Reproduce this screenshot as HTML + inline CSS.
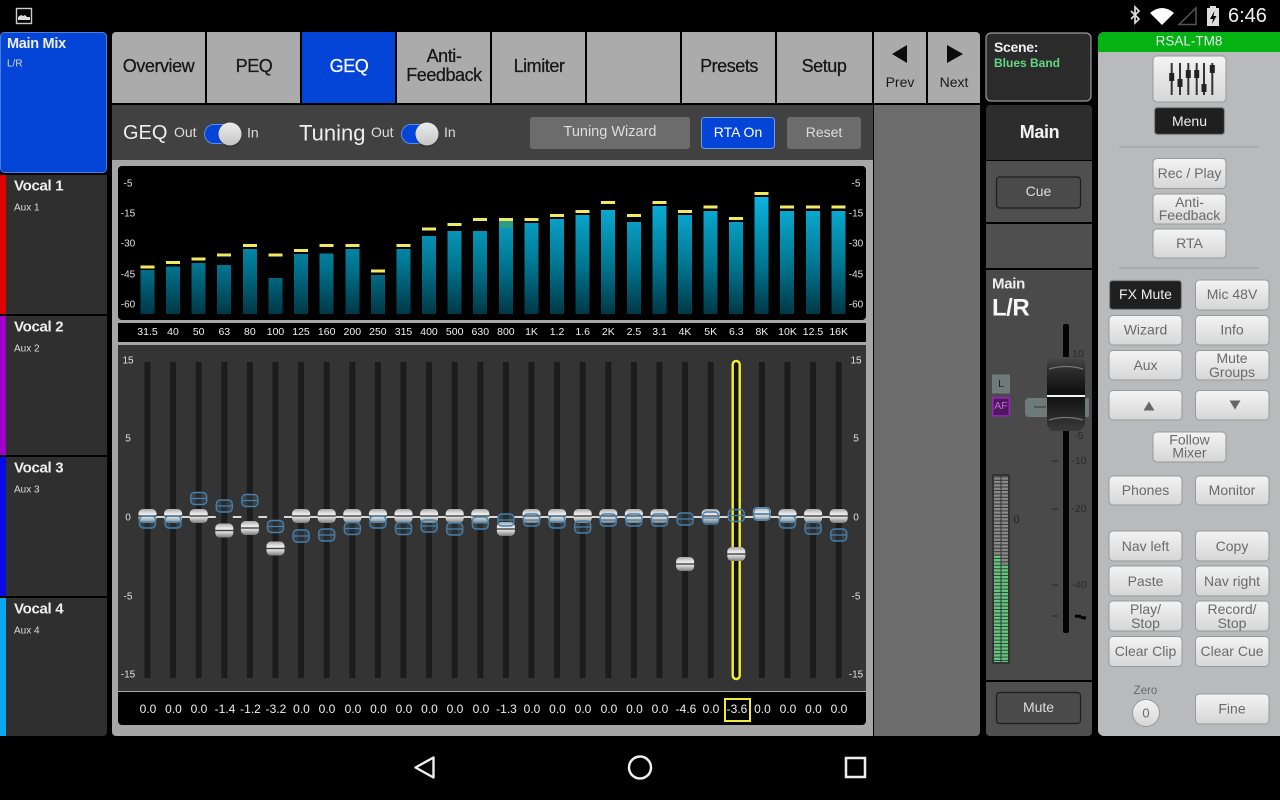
<!DOCTYPE html>
<html><head><meta charset="utf-8"><title>GEQ</title>
<style>
html,body{margin:0;padding:0;background:#000;width:1280px;height:800px;overflow:hidden}
svg{display:block}
text{font-family:"Liberation Sans",sans-serif;dominant-baseline:central}
.m{text-anchor:middle}
.t{font-size:18px;fill:#161616;stroke:#161616;stroke-width:.25px;text-anchor:middle;letter-spacing:-.45px}
.b{font-size:14px;fill:#6a6a6a;text-anchor:middle}
.s{font-size:10px;fill:#e0e0e0;text-anchor:middle}
.f{font-size:10.5px;fill:#eee;text-anchor:middle}
.v{font-size:12px;fill:#eee;text-anchor:middle}
.n{font-size:15px;font-weight:bold;fill:#eee;letter-spacing:-.3px}
.a{font-size:10px;fill:#ddd}
.k{font-size:10.5px;fill:#2a2a2a;text-anchor:middle}
</style></head><body>
<svg width="1280" height="800" viewBox="0 0 1280 800" xmlns="http://www.w3.org/2000/svg">
<defs>
<linearGradient id="bar" gradientUnits="userSpaceOnUse" x1="0" y1="197" x2="0" y2="314"><stop offset="0" stop-color="#0cb4de"/><stop offset=".6" stop-color="#00748e"/><stop offset="1" stop-color="#003848"/></linearGradient>
<linearGradient id="cap" x1="0" y1="0" x2="0" y2="1"><stop offset="0" stop-color="#a8a8a8"/><stop offset=".35" stop-color="#ececec"/><stop offset=".6" stop-color="#dedede"/><stop offset="1" stop-color="#7c7c7c"/></linearGradient>
<linearGradient id="btn" x1="0" y1="0" x2="0" y2="1"><stop offset="0" stop-color="#f4f4f4"/><stop offset="1" stop-color="#d6d6d6"/></linearGradient>
<linearGradient id="fad" x1="0" y1="0" x2="0" y2="1"><stop offset="0" stop-color="#4a4a4a"/><stop offset=".14" stop-color="#333"/><stop offset=".2" stop-color="#2a2a2a"/><stop offset=".5" stop-color="#0e0e0e"/><stop offset=".82" stop-color="#2a2a2a"/><stop offset="1" stop-color="#3a3a3a"/></linearGradient>
<linearGradient id="knob" x1="0" y1="0" x2="0" y2="1"><stop offset="0" stop-color="#ececec"/><stop offset="1" stop-color="#c6c6c6"/></linearGradient>
<pattern id="mg" patternUnits="userSpaceOnUse" width="20" height="3.4" y="474"><rect width="20" height="3.4" fill="#3a3a3a"/><rect width="20" height="2.3" fill="#8b8b8b"/></pattern>
<pattern id="mq" patternUnits="userSpaceOnUse" width="20" height="3.4" y="474"><rect width="20" height="3.4" fill="#2d4a35"/><rect width="20" height="2.4" fill="#66c480"/></pattern>
<g id="c"><rect x="-9" y="-7" width="18" height="14" rx="4.5" fill="url(#cap)"/><rect x="-9" y="-.7" width="18" height="1.4" fill="#444"/></g>
<g id="h"><rect x="-8" y="-6" width="16" height="12" rx="4" fill="#7fc0ee" fill-opacity=".1" stroke="#4580ae" stroke-width="1.4"/><line x1="-8" x2="8" y1="0" y2="0" stroke="#4580ae" stroke-width="1.2"/></g>
</defs>
<rect width="1280" height="800" fill="#000"/>

<!-- status bar -->
<rect x="16.5" y="8.5" width="15" height="15" fill="none" stroke="#ccc" stroke-width="1.4"/>
<path d="M18 20v-3l3-2 2 1 2-1 2 2 3 0v3z" fill="#ddd"/>
<path d="M1131 11l8 8-4 4V7l4 4-8 8" fill="none" stroke="#ddd" stroke-width="1.7"/>
<path d="M1150 13Q1162 3 1174 13L1162 25z" fill="#fff"/>
<path d="M1179 24.500L1196 8v16.500z" fill="none" stroke="#555" stroke-width="1.500"/>
<rect x="1207" y="8" width="12" height="18" fill="#ddd"/><rect x="1210" y="6" width="6" height="2" fill="#ddd"/>
<path d="M1214.500 11l-4.500 8h3l-1 5 4.500-8h-3z" fill="#000"/>
<text x="1228" y="16" font-size="20" fill="#f0f0f0">6:46</text>

<!-- left channel list -->
<rect x="0.500" y="32.500" width="106" height="140" rx="4" fill="#0445d8" stroke="#4a7fe0"/>
<text x="7" y="44" class="n" style="font-size:14.500px">Main Mix</text>
<text x="7" y="64" class="a" fill="#ddd">L/R</text>
<rect x="0" y="175" width="107" height="139" fill="#2f2f2f"/><rect x="0" y="175" width="6" height="139" fill="#e00000"/>
<text x="14" y="186" class="n">Vocal 1</text><text x="14" y="208" class="a">Aux 1</text>
<rect x="0" y="316" width="107" height="139" fill="#2f2f2f"/><rect x="0" y="316" width="6" height="139" fill="#a000c8"/>
<text x="14" y="327" class="n">Vocal 2</text><text x="14" y="349" class="a">Aux 2</text>
<rect x="0" y="457" width="107" height="139" fill="#2f2f2f"/><rect x="0" y="457" width="6" height="139" fill="#0a0ae6"/>
<text x="14" y="468" class="n">Vocal 3</text><text x="14" y="490" class="a">Aux 3</text>
<path d="M0 598h107v134a4 4 0 0 1-4 4H0z" fill="#2f2f2f"/><rect x="0" y="598" width="6" height="138" fill="#0aa8f0"/>
<text x="14" y="609" class="n">Vocal 4</text><text x="14" y="631" class="a">Aux 4</text>

<!-- tabs -->
<g fill="#ababab">
<path d="M112 36a4 4 0 0 1 4-4h89v71h-93z"/><rect x="207" y="32" width="93" height="71"/>
<rect x="302" y="32" width="93" height="71" fill="#0445d8"/>
<rect x="397" y="32" width="93" height="71"/><rect x="492" y="32" width="93" height="71"/><rect x="587" y="32" width="93" height="71"/><rect x="682" y="32" width="93" height="71"/><rect x="777" y="32" width="95" height="71"/>
<rect x="874" y="32" width="52" height="71"/><path d="M928 32h48a4 4 0 0 1 4 4v67h-52z"/>
</g>
<text x="158.500" y="66" class="t">Overview</text>
<text x="254" y="66" class="t">PEQ</text>
<text x="349" y="66" class="t" style="fill:#fff;stroke:#fff">GEQ</text>
<text x="444" y="56" class="t">Anti-</text><text x="444" y="75" class="t">Feedback</text>
<text x="539" y="66" class="t">Limiter</text>
<text x="729" y="66" class="t">Presets</text>
<text x="824" y="66" class="t">Setup</text>
<path d="M907 45l-15 9 15 9z" fill="#0c0c0c"/><path d="M947 45l16 9-16 9z" fill="#0c0c0c"/>
<text x="900" y="82" class="m" font-size="14" fill="#1a1a1a">Prev</text>
<text x="954" y="82" class="m" font-size="14" fill="#1a1a1a">Next</text>

<!-- GEQ main panel -->
<path d="M112 105h761v631H116a4 4 0 0 1-4-4z" fill="#a6a6a6"/>
<path d="M874 105h106v627a4 4 0 0 1-4 4h-102z" fill="#6c6c6c"/>
<rect x="112" y="105" width="761" height="55" fill="#414141"/>
<text x="123" y="133" font-size="20" fill="#eee">GEQ</text>
<text x="174" y="132" font-size="14" fill="#ddd">Out</text>
<rect x="204.500" y="124.500" width="33" height="19" rx="9.500" fill="#0445d8" stroke="#5a8fe8"/>
<circle cx="230" cy="135.500" r="11.500" fill="#222" opacity=".5"/>
<circle cx="230" cy="134" r="11.500" fill="url(#knob)"/>
<text x="247" y="132.500" font-size="14" fill="#ddd">In</text>
<text x="299" y="133" font-size="22" fill="#eee">Tuning</text>
<text x="371" y="132" font-size="14" fill="#ddd">Out</text>
<rect x="401.500" y="124.500" width="33" height="19" rx="9.500" fill="#0445d8" stroke="#5a8fe8"/>
<circle cx="427" cy="135.500" r="11.500" fill="#222" opacity=".5"/>
<circle cx="427" cy="134" r="11.500" fill="url(#knob)"/>
<text x="444" y="132" font-size="14" fill="#ddd">In</text>
<rect x="530" y="117" width="160" height="32" rx="3" fill="#6c6c6c"/>
<text x="610" y="132" class="m" font-size="14.500" fill="#ddd">Tuning Wizard</text>
<rect x="701.500" y="117.500" width="73" height="31" rx="3" fill="#0445d8" stroke="#6a9ae8"/>
<text x="738" y="132" class="m" font-size="14" fill="#fff">RTA On</text>
<rect x="787" y="117" width="74" height="32" rx="3" fill="#6c6c6c"/>
<text x="824" y="132" class="m" font-size="14" fill="#ddd">Reset</text>

<!-- RTA -->
<rect x="118" y="166" width="748" height="154" rx="4" fill="#000"/>
<rect x="118" y="323" width="748" height="19" fill="#000"/>
<g fill="url(#bar)">
<rect x="140.500" y="270" width="14" height="44"/><rect x="166" y="266.500" width="14" height="47.500"/><rect x="191.500" y="263" width="14" height="51"/><rect x="217" y="265" width="14" height="49"/><rect x="243" y="249" width="14" height="65"/><rect x="268.500" y="278" width="14" height="36"/><rect x="294" y="254" width="14" height="60"/><rect x="319.500" y="253.500" width="14" height="60.500"/><rect x="345.500" y="249" width="14" height="65"/><rect x="371" y="275" width="14" height="39"/><rect x="396.500" y="249" width="14" height="65"/><rect x="422" y="236" width="14" height="78"/><rect x="447.500" y="231" width="14" height="83"/><rect x="473" y="231" width="14" height="83"/><rect x="499" y="228" width="14" height="86"/><rect x="524.500" y="223" width="14" height="91"/><rect x="550" y="219" width="14" height="95"/><rect x="575.500" y="215" width="14" height="99"/><rect x="601" y="210" width="14" height="104"/><rect x="627" y="222" width="14" height="92"/><rect x="652.500" y="206" width="14" height="108"/><rect x="678" y="215" width="14" height="99"/><rect x="703.500" y="211" width="14" height="103"/><rect x="729" y="222" width="14" height="92"/><rect x="754.500" y="197" width="14" height="117"/><rect x="780" y="211" width="14" height="103"/><rect x="806" y="211" width="14" height="103"/><rect x="831.500" y="211" width="14" height="103"/>
</g>
<rect x="499" y="220" width="14" height="8" fill="#2e9a8a"/>
<g fill="#f0ea60">
<rect x="140.500" y="265.500" width="14" height="3"/><rect x="166" y="261" width="14" height="3"/><rect x="191.500" y="257.500" width="14" height="3"/><rect x="217" y="253.500" width="14" height="3"/><rect x="243" y="244" width="14" height="3"/><rect x="268.500" y="253.500" width="14" height="3"/><rect x="294" y="249" width="14" height="3"/><rect x="319.500" y="244" width="14" height="3"/><rect x="345.500" y="244" width="14" height="3"/><rect x="371" y="269.500" width="14" height="3"/><rect x="396.500" y="244" width="14" height="3"/><rect x="422" y="227.500" width="14" height="3"/><rect x="447.500" y="223" width="14" height="3"/><rect x="473" y="218" width="14" height="3"/><rect x="499" y="218" width="14" height="3"/><rect x="524.500" y="218" width="14" height="3"/><rect x="550" y="214" width="14" height="3"/><rect x="575.500" y="210" width="14" height="3"/><rect x="601" y="201" width="14" height="3"/><rect x="627" y="214" width="14" height="3"/><rect x="652.500" y="201" width="14" height="3"/><rect x="678" y="210" width="14" height="3"/><rect x="703.500" y="205.500" width="14" height="3"/><rect x="729" y="217" width="14" height="3"/><rect x="754.500" y="192" width="14" height="3"/><rect x="780" y="205.500" width="14" height="3"/><rect x="806" y="205.500" width="14" height="3"/><rect x="831.500" y="205.500" width="14" height="3"/>
</g>
<text x="128" y="184" class="s">-5</text><text x="128" y="214" class="s">-15</text><text x="128" y="244" class="s">-30</text><text x="128" y="275" class="s">-45</text><text x="128" y="305" class="s">-60</text>
<text x="856" y="184" class="s">-5</text><text x="856" y="214" class="s">-15</text><text x="856" y="244" class="s">-30</text><text x="856" y="275" class="s">-45</text><text x="856" y="305" class="s">-60</text>
<text x="147.500" y="332" class="f">31.5</text><text x="173" y="332" class="f">40</text><text x="198.700" y="332" class="f">50</text><text x="224.300" y="332" class="f">63</text><text x="249.900" y="332" class="f">80</text><text x="275.500" y="332" class="f">100</text><text x="301" y="332" class="f">125</text><text x="326.700" y="332" class="f">160</text><text x="352.300" y="332" class="f">200</text><text x="377.900" y="332" class="f">250</text><text x="403.500" y="332" class="f">315</text><text x="429" y="332" class="f">400</text><text x="454.700" y="332" class="f">500</text><text x="480.300" y="332" class="f">630</text><text x="505.900" y="332" class="f">800</text><text x="531.500" y="332" class="f">1K</text><text x="557" y="332" class="f">1.2</text><text x="582.700" y="332" class="f">1.6</text><text x="608.300" y="332" class="f">2K</text><text x="633.900" y="332" class="f">2.5</text><text x="659.500" y="332" class="f">3.1</text><text x="685" y="332" class="f">4K</text><text x="710.700" y="332" class="f">5K</text><text x="736.300" y="332" class="f">6.3</text><text x="761.900" y="332" class="f">8K</text><text x="787.500" y="332" class="f">10K</text><text x="813" y="332" class="f">12.5</text><text x="838.700" y="332" class="f">16K</text>

<!-- fader panel -->
<rect x="118" y="345" width="748" height="346" fill="#343434"/>
<line x1="144.500" x2="842" y1="520" y2="520" stroke="#1c1c1c" stroke-width="316" stroke-dasharray="6 19.600"/>
<line x1="156" x2="832" y1="517" y2="517" stroke="#d8d8d8" stroke-width="2" stroke-dasharray="8.600 17"/>
<text x="128" y="361" class="s">15</text><text x="128" y="439" class="s">5</text><text x="128" y="518" class="s">0</text><text x="128" y="597" class="s">-5</text><text x="128" y="675" class="s">-15</text>
<text x="856" y="361" class="s">15</text><text x="856" y="439" class="s">5</text><text x="856" y="518" class="s">0</text><text x="856" y="597" class="s">-5</text><text x="856" y="675" class="s">-15</text>
<rect x="732.700" y="361" width="7" height="318" rx="3.500" fill="#111" stroke="#f4ee30" stroke-width="2.400"/>
<use href="#c" x="147.500" y="516"/><use href="#c" x="173.100" y="516"/><use href="#c" x="198.700" y="516"/><use href="#c" x="224.300" y="530.500"/><use href="#c" x="249.900" y="528"/><use href="#c" x="275.500" y="548.500"/><use href="#c" x="301.100" y="516"/><use href="#c" x="326.700" y="516"/><use href="#c" x="352.300" y="516"/><use href="#c" x="377.900" y="516"/><use href="#c" x="403.500" y="516"/><use href="#c" x="429.100" y="516"/><use href="#c" x="454.700" y="516"/><use href="#c" x="480.300" y="516"/><use href="#c" x="505.900" y="529"/><use href="#c" x="531.500" y="516"/><use href="#c" x="557.100" y="516"/><use href="#c" x="582.700" y="516"/><use href="#c" x="608.300" y="516"/><use href="#c" x="633.900" y="516"/><use href="#c" x="659.500" y="516"/><use href="#c" x="685.100" y="564"/><use href="#c" x="710.700" y="516"/><use href="#c" x="736.300" y="554"/><use href="#c" x="761.900" y="514"/><use href="#c" x="787.500" y="516"/><use href="#c" x="813.100" y="516"/><use href="#c" x="838.700" y="516"/>
<use href="#h" x="147.500" y="522"/><use href="#h" x="173.100" y="522"/><use href="#h" x="198.700" y="498.500"/><use href="#h" x="224.300" y="506"/><use href="#h" x="249.900" y="500.500"/><use href="#h" x="275.500" y="526.500"/><use href="#h" x="301.100" y="536"/><use href="#h" x="326.700" y="535"/><use href="#h" x="352.300" y="528.500"/><use href="#h" x="377.900" y="522"/><use href="#h" x="403.500" y="528.500"/><use href="#h" x="429.100" y="526"/><use href="#h" x="454.700" y="529"/><use href="#h" x="480.300" y="523"/><use href="#h" x="505.900" y="520"/><use href="#h" x="531.500" y="520"/><use href="#h" x="557.100" y="522"/><use href="#h" x="582.700" y="527"/><use href="#h" x="608.300" y="520"/><use href="#h" x="633.900" y="520"/><use href="#h" x="659.500" y="520"/><use href="#h" x="685.100" y="519"/><use href="#h" x="710.700" y="518"/><use href="#h" x="736.300" y="515.500"/><use href="#h" x="761.900" y="514"/><use href="#h" x="787.500" y="522"/><use href="#h" x="813.100" y="528"/><use href="#h" x="838.700" y="535"/>

<path d="M118 692h748v29a4 4 0 0 1-4 4H122a4 4 0 0 1-4-4z" fill="#000"/>
<text x="148" y="709" class="v">0.0</text><text x="173.500" y="709" class="v">0.0</text><text x="199" y="709" class="v">0.0</text><text x="225" y="709" class="v">-1.4</text><text x="250.500" y="709" class="v">-1.2</text><text x="276" y="709" class="v">-3.2</text><text x="301.500" y="709" class="v">0.0</text><text x="327" y="709" class="v">0.0</text><text x="353" y="709" class="v">0.0</text><text x="378.500" y="709" class="v">0.0</text><text x="404" y="709" class="v">0.0</text><text x="429.500" y="709" class="v">0.0</text><text x="455" y="709" class="v">0.0</text><text x="481" y="709" class="v">0.0</text><text x="506.500" y="709" class="v">-1.3</text><text x="532" y="709" class="v">0.0</text><text x="557.500" y="709" class="v">0.0</text><text x="583" y="709" class="v">0.0</text><text x="609" y="709" class="v">0.0</text><text x="634.500" y="709" class="v">0.0</text><text x="660" y="709" class="v">0.0</text><text x="686" y="709" class="v">-4.6</text><text x="711" y="709" class="v">0.0</text><text x="737" y="709" class="v">-3.6</text><text x="762.500" y="709" class="v">0.0</text><text x="788" y="709" class="v">0.0</text><text x="813.500" y="709" class="v">0.0</text><text x="839" y="709" class="v">0.0</text>
<rect x="725" y="699" width="25" height="22" fill="none" stroke="#efe93a" stroke-width="2"/>

<!-- scene -->
<rect x="986" y="33" width="105" height="68" rx="5" fill="#2b2b2b" stroke="#9a9a9a" stroke-width="1.200"/>
<text x="994" y="47" font-size="14" font-weight="bold" fill="#eee" letter-spacing="-.3">Scene:</text>
<text x="994" y="63" font-size="12" font-weight="bold" fill="#62d884">Blues Band</text>

<!-- main strip -->
<path d="M986 109a4 4 0 0 1 4-4h98a4 4 0 0 1 4 4v51H986z" fill="#2d2d2d"/>
<text x="1039.500" y="132" class="m" font-size="18" font-weight="bold" fill="#f2f2f2" letter-spacing="-.4">Main</text>
<rect x="986" y="161" width="106" height="61" fill="#4f4f4f"/>
<rect x="996.500" y="177" width="84" height="31" rx="3" fill="#4a4a4a" stroke="#1d1d1d" stroke-width="1.200"/>
<text x="1038.500" y="191" class="m" font-size="14" fill="#ddd">Cue</text>
<rect x="986" y="224" width="106" height="44" fill="#4f4f4f"/>
<rect x="986" y="270" width="106" height="410" fill="#4a4a4a"/>
<path d="M986 682h106v50a4 4 0 0 1-4 4h-98a4 4 0 0 1-4-4z" fill="#4f4f4f"/>
<rect x="996.500" y="692.500" width="84" height="31" rx="3" fill="#4a4a4a" stroke="#1d1d1d" stroke-width="1.200"/>
<text x="1038.500" y="707" class="m" font-size="14" fill="#ddd">Mute</text>
<text x="992" y="284" font-size="15" font-weight="bold" fill="#eee" letter-spacing="-.3">Main</text>
<text x="992" y="308" font-size="24" font-weight="bold" fill="#f6f6f6" letter-spacing="-.5">L/R</text>
<rect x="992" y="374.500" width="18" height="19" fill="#6f7b7b"/>
<text x="1001" y="384" class="m" font-size="10.500" fill="#222">L</text>
<rect x="992.800" y="397.800" width="16.500" height="18" fill="#4a1a5a" stroke="#a020c0" stroke-width="1.500"/>
<text x="1001" y="406" class="m" font-size="10.500" fill="#d060f0">AF</text>
<rect x="1025" y="398" width="32" height="19" rx="4" fill="#6f7b7b"/>
<line x1="1034" x2="1046" y1="407" y2="407" stroke="#333" stroke-width="1"/>
<rect x="1063" y="324" width="6" height="309" rx="2" fill="#050505"/>
<g stroke="#2c2c2c" stroke-width="1.200">
<line x1="1052" x2="1058" y1="461" y2="461"/><line x1="1052" x2="1058" y1="509" y2="509"/><line x1="1052" x2="1058" y1="585" y2="585"/><line x1="1052" x2="1058" y1="616" y2="616"/>
</g>
<text x="1078" y="354" class="k">10</text><text x="1079" y="461" class="k">-10</text><text x="1079" y="509" class="k">-20</text><text x="1079" y="585" class="k">-40</text><text x="1079" y="436" class="k">-5</text>
<path d="M1075 616l6 .500M1081 617.500l5 .500" stroke="#000" stroke-width="3"/>
<rect x="1085" y="398" width="4" height="19" rx="1" fill="#6f7b7b"/>
<path d="M1047 362l4-5h30l4 5v63l-5 6h-29l-4-6z" fill="url(#fad)"/>
<path d="M1049 369q17-5 34 0M1049 420q17-5 34 0" fill="none" stroke="#777" stroke-width="1.200"/>
<rect x="1047" y="395" width="38" height="2" fill="#f4f4f4"/>

<!-- meter -->
<rect x="992" y="474" width="18" height="190" fill="#333"/>
<rect x="994" y="476" width="6.500" height="80" fill="url(#mg)"/>
<rect x="994" y="556" width="6.500" height="106" fill="url(#mq)"/>
<rect x="1001.500" y="476" width="6.500" height="89" fill="url(#mg)"/>
<rect x="1001.500" y="565" width="6.500" height="97" fill="url(#mq)"/>
<text x="1016.500" y="520" class="m" font-size="11" fill="#222">0</text>

<!-- right panel -->
<path d="M1098 38a6 6 0 0 1 6-6h176v704h-176a6 6 0 0 1-6-6z" fill="#b8babc"/>
<path d="M1098 38a6 6 0 0 1 6-6h176v20h-182z" fill="#04b214"/>
<text x="1189" y="41" class="m" font-size="13.500" fill="#e8e8e8">RSAL-TM8</text>
<rect x="1153" y="56" width="73" height="46" rx="4" fill="url(#btn)" stroke="#999"/>
<g stroke="#333" stroke-width="2"><line x1="1171.700" x2="1171.700" y1="63" y2="95"/><line x1="1180" x2="1180" y1="63" y2="95"/><line x1="1188.300" x2="1188.300" y1="63" y2="95"/><line x1="1196.700" x2="1196.700" y1="63" y2="95"/><line x1="1204" x2="1204" y1="63" y2="95"/><line x1="1212.300" x2="1212.300" y1="63" y2="95"/></g>
<g fill="#222"><rect x="1169.200" y="73" width="5" height="8"/><rect x="1177.500" y="79" width="5" height="8"/><rect x="1185.800" y="70" width="5" height="8"/><rect x="1194.200" y="70" width="5" height="8"/><rect x="1201.500" y="84" width="5" height="8"/><rect x="1209.800" y="65" width="5" height="8"/></g>
<rect x="1154.500" y="107.500" width="70" height="27" rx="3" fill="#1f1f1f" stroke="#8a8a8a" stroke-width="1.200"/>
<text x="1189.500" y="121" class="m" font-size="14" fill="#eee">Menu</text>
<line x1="1119" x2="1259" y1="147" y2="147" stroke="#9a9a9a"/>
<line x1="1119" x2="1259" y1="268" y2="268" stroke="#9a9a9a"/>
<g fill="url(#btn)" stroke="#999">
<rect x="1153" y="158.500" width="73" height="30" rx="4"/><rect x="1153" y="194" width="73" height="30" rx="4"/><rect x="1153" y="229" width="73" height="29" rx="4"/>
<rect x="1195.500" y="280" width="73.500" height="30" rx="4"/>
<rect x="1109" y="315.500" width="73" height="29.500" rx="4"/><rect x="1195.500" y="315.500" width="73.500" height="29.500" rx="4"/>
<rect x="1109" y="350.500" width="73" height="29.500" rx="4"/><rect x="1195.500" y="350.500" width="73.500" height="29.500" rx="4"/>
<rect x="1109" y="390.500" width="73" height="29.500" rx="4"/><rect x="1195.500" y="390.500" width="73.500" height="29.500" rx="4"/>
<rect x="1153" y="432" width="73" height="30" rx="4"/>
<rect x="1109" y="476" width="73" height="29" rx="4"/><rect x="1195.500" y="476" width="73.500" height="29" rx="4"/>
<rect x="1109" y="531" width="73" height="30" rx="4"/><rect x="1195.500" y="531" width="73.500" height="30" rx="4"/>
<rect x="1109" y="566" width="73" height="30" rx="4"/><rect x="1195.500" y="566" width="73.500" height="30" rx="4"/>
<rect x="1109" y="601" width="73" height="30" rx="4"/><rect x="1195.500" y="601" width="73.500" height="30" rx="4"/>
<rect x="1109" y="636.500" width="73" height="30" rx="4"/><rect x="1195.500" y="636.500" width="73.500" height="30" rx="4"/>
<rect x="1195.500" y="694" width="73.500" height="30" rx="4"/>
</g>
<rect x="1109.500" y="280.500" width="72" height="29" rx="3" fill="#1f1f1f" stroke="#8a8a8a" stroke-width="1.200"/>
<text x="1145.500" y="294" class="m" font-size="14" fill="#eee">FX Mute</text>
<text x="1189.500" y="173" class="b">Rec / Play</text>
<text x="1189.500" y="202" class="b">Anti-</text><text x="1189.500" y="215" class="b">Feedback</text>
<text x="1189.500" y="243" class="b">RTA</text>
<text x="1232" y="294" class="b">Mic 48V</text>
<text x="1145.500" y="329.500" class="b">Wizard</text><text x="1232" y="329.500" class="b">Info</text>
<text x="1145.500" y="365" class="b">Aux</text>
<text x="1232" y="358" class="b">Mute</text><text x="1232" y="372" class="b">Groups</text>
<path d="M1143.500 410.500l5.500-9 5.500 9z" fill="#666"/><path d="M1229.500 400.500l5.500 9 5.500-9z" fill="#666"/>
<text x="1189.500" y="439.500" class="b">Follow</text><text x="1189.500" y="452.500" class="b">Mixer</text>
<text x="1145.500" y="490" class="b">Phones</text><text x="1232" y="490" class="b">Monitor</text>
<text x="1145.500" y="546" class="b">Nav left</text><text x="1232" y="546" class="b">Copy</text>
<text x="1145.500" y="581" class="b">Paste</text><text x="1232" y="581" class="b">Nav right</text>
<text x="1145.500" y="609" class="b">Play/</text><text x="1145.500" y="623" class="b">Stop</text>
<text x="1232" y="609" class="b">Record/</text><text x="1232" y="623" class="b">Stop</text>
<text x="1145.500" y="651" class="b">Clear Clip</text><text x="1232" y="651" class="b">Clear Cue</text>
<text x="1145.500" y="691" class="m" font-size="11.500" fill="#6a6a6a">Zero</text>
<circle cx="1146" cy="713" r="13.500" fill="url(#btn)" stroke="#999"/>
<text x="1146" y="713" class="m" font-size="13" fill="#6a6a6a">0</text>
<text x="1232" y="708.500" class="b">Fine</text>

<!-- nav bar -->
<path d="M433.500 757.500v20l-18-10z" fill="none" stroke="#eee" stroke-width="2.400" stroke-linejoin="round"/>
<circle cx="640" cy="767.500" r="11" fill="none" stroke="#eee" stroke-width="2.500"/>
<rect x="846" y="758" width="19" height="19" fill="none" stroke="#eee" stroke-width="2.500"/>
</svg>
</body></html>
